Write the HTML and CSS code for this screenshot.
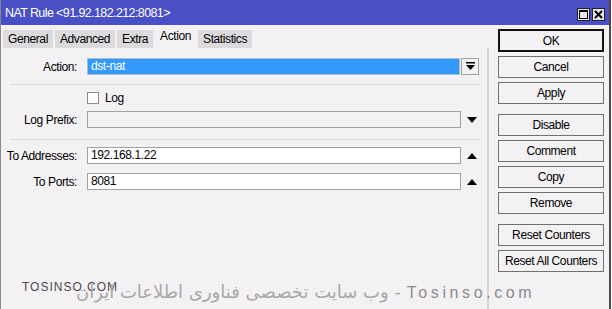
FILE: index.html
```html
<!DOCTYPE html>
<html lang="en">
<head>
    <meta charset="UTF-8">
    <title>NAT Rule</title>
    <link rel="stylesheet" href="styles.css">
</head>
<body>

<div class="window">
    <!-- Title bar -->
    <header class="titlebar">
        <span class="title">NAT Rule &lt;91.92.182.212:8081&gt;</span>
        <div class="win-btns">
            <span class="win-btn">
                <svg width="11" height="11" viewBox="0 0 11 11"><rect x="1.5" y="1.5" width="8" height="8" fill="none" stroke="#000" stroke-width="1"/><rect x="1" y="1" width="9" height="2" fill="#000"/></svg>
            </span>
            <span class="win-btn">
                <svg width="11" height="11" viewBox="0 0 11 11"><path d="M2 2 L9 9 M9 2 L2 9" stroke="#000" stroke-width="2"/></svg>
            </span>
        </div>
    </header>

    <div class="main">
        <div class="left">
            <div class="tabs">
                <div class="tab">General</div>
                <div class="tab">Advanced</div>
                <div class="tab">Extra</div>
                <div class="tab active">Action</div>
                <div class="tab">Statistics</div>
            </div>

            <div class="panel">
                <div class="row row-action">
                    <label class="label">Action:</label>
                    <div class="field select">dst-nat</div>
                    <span class="drop-btn">
                        <svg width="9" height="9" viewBox="0 0 9 9"><rect x="0" y="0" width="9" height="1.5" fill="#000"/><path d="M0 3 H9 L4.5 8 Z" fill="#000"/></svg>
                    </span>
                </div>

                <div class="sep"></div>

                <div class="row row-check">
                    <span class="label"></span>
                    <span class="checkbox"></span>
                    <span class="check-text">Log</span>
                </div>

                <div class="row row-prefix">
                    <label class="label">Log Prefix:</label>
                    <div class="field disabled"></div>
                    <span class="arrow">
                        <svg width="10" height="6" viewBox="0 0 10 6"><path d="M0 0 H10 L5 6 Z" fill="#000"/></svg>
                    </span>
                </div>

                <div class="sep sep-2"></div>

                <div class="row row-addr">
                    <label class="label">To Addresses:</label>
                    <div class="field">192.168.1.22</div>
                    <span class="arrow">
                        <svg width="10" height="6" viewBox="0 0 10 6"><path d="M0 6 H10 L5 0 Z" fill="#000"/></svg>
                    </span>
                </div>

                <div class="row row-ports">
                    <label class="label">To Ports:</label>
                    <div class="field">8081</div>
                    <span class="arrow">
                        <svg width="10" height="6" viewBox="0 0 10 6"><path d="M0 6 H10 L5 0 Z" fill="#000"/></svg>
                    </span>
                </div>
            </div>
        </div>

        <!-- Buttons column -->
        <div class="right">
            <button class="btn default">OK</button>
            <button class="btn">Cancel</button>
            <button class="btn">Apply</button>
            <button class="btn gap">Disable</button>
            <button class="btn">Comment</button>
            <button class="btn">Copy</button>
            <button class="btn">Remove</button>
            <button class="btn gap">Reset Counters</button>
            <button class="btn">Reset All Counters</button>
        </div>
    </div>

    <!-- watermark -->
    <div class="wm-small">TOSINSO.COM</div>
    <div class="wm-big">وب سایت تخصصی فناوری اطلاعات ایران - <span class="wm-latin">Tosinso.com</span></div>
</div>

</body>
</html>
```

FILE: styles.css
```css
* { margin: 0; padding: 0; box-sizing: border-box; }

body {
    font-family: "Liberation Sans", Arial, sans-serif;
    font-size: 12px;
    letter-spacing: -0.4px;
    color: #000;
    background: #fff;
}

.window {
    position: relative;
    width: 611px;
    height: 309px;
    background: #f4f1f4;
    border-left: 1px solid #8a888a;
    border-right: 2px solid #4a4a4a;
    display: flex;
    flex-direction: column;
    overflow: hidden;
}

/* Title bar */
.titlebar {
    height: 25px;
    background: #4a4fc6;
    color: #fff;
    display: flex;
    align-items: center;
    justify-content: space-between;
    padding: 0 4px 0 4px;
    font-size: 12.5px;
    letter-spacing: -0.6px;
}
.win-btns { display: flex; gap: 2px; margin-top: 4px; }
.win-btn {
    width: 13px;
    height: 13px;
    background: #e6e4e6;
    border: 1px solid #222;
    display: flex;
    align-items: center;
    justify-content: center;
}

.main { display: flex; flex: 1; }
.left { width: 488px; display: flex; flex-direction: column; }

/* Tabs */
.tabs {
    height: 23px;
    display: flex;
    align-items: flex-end;
    gap: 2px;
    padding-left: 2px;
}
.tab {
    height: 18px;
    line-height: 18px;
    padding: 0 5px;
    background: #dcdadc;
    white-space: nowrap;
}
.tab.active { height: 21px; line-height: 19px; background: #f4f1f4; }

/* Form */
.panel {
    flex: 1;
    padding-top: 10px;
    border-right: 2px solid #d6d2d6;
}
.row { display: flex; align-items: center; height: 17px; }
.label {
    width: 76px;
    margin-right: 10px;
    text-align: right;
    white-space: nowrap;
}
.field {
    width: 374px;
    height: 17px;
    line-height: 15px;
    padding-left: 3px;
    background: #fff;
    border: 1px solid #a2a2a2;
}
.field.select {
    width: 373px;
    background: #3399ff;
    color: #fff;
    border-color: #a8c0cc;
}
.field.disabled { background: #f4f1f4; }
.drop-btn {
    width: 18px;
    height: 17px;
    margin-left: 1px;
    border: 1px solid #a2a2a2;
    display: flex;
    align-items: center;
    justify-content: center;
}
.arrow {
    width: 19px;
    display: flex;
    justify-content: center;
    padding-left: 2px;
}

.sep {
    height: 1px;
    background: #dcd8dc;
    margin: 9px 7px 0 9px;
}
.sep-2 { margin-top: 11px; }

.row-check { margin-top: 7px; height: 12px; }
.checkbox {
    width: 12px;
    height: 12px;
    background: #fff;
    border: 1px solid #8c8c8c;
}
.check-text { margin-left: 6px; }
.row-prefix { margin-top: 7px; }
.row-addr { margin-top: 7px; }
.row-ports { margin-top: 9px; }

/* Buttons column */
.right {
    display: flex;
    flex-direction: column;
    gap: 4px;
    padding: 4px 0 0 9px;
}
.btn {
    width: 106px;
    height: 22px;
    background: #f4f1f4;
    border: 1px solid #707070;
    font-family: inherit;
    font-size: 12px;
    letter-spacing: -0.4px;
    white-space: nowrap;
    color: #000;
}
.btn.default { height: 23px; border: 2px solid #111; }
.btn.gap { margin-top: 6px; }

/* Watermark over the window */
.wm-small {
    position: absolute;
    left: 21px;
    top: 280px;
    font-size: 12px;
    letter-spacing: 1px;
    color: #4a4a4a;
}
.wm-big {
    position: absolute;
    left: 75px;
    top: 281px;
    font-family: "DejaVu Sans", sans-serif;
    font-size: 18px;
    letter-spacing: 0;
    color: #a8a8a8;
    white-space: nowrap;
}
.wm-latin {
    font-family: "Liberation Sans", Arial, sans-serif;
    font-size: 16px;
    letter-spacing: 3.6px;
    color: #8c8c8c;
}
```
